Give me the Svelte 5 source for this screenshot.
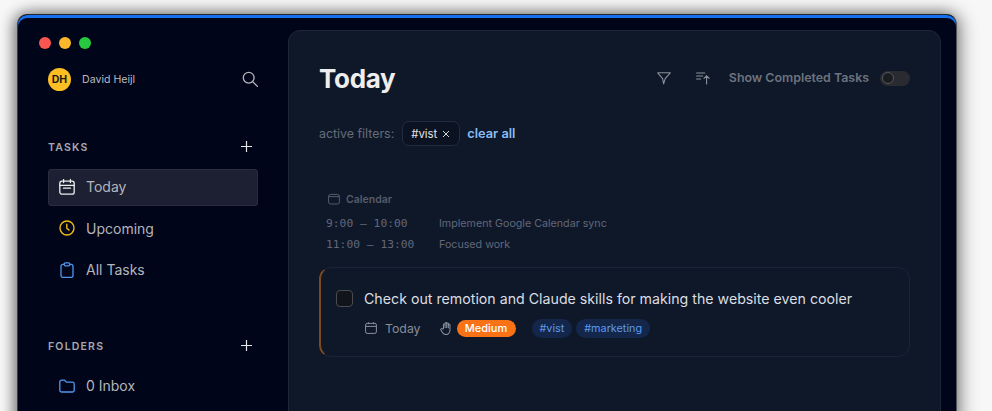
<script lang="ts">
	const navItems = [
		{ label: 'Today', icon: 'calendar', active: true },
		{ label: 'Upcoming', icon: 'clock', active: false },
		{ label: 'All Tasks', icon: 'clipboard', active: false },
	];
	const events = [
		{ time: '9:00 – 10:00', title: 'Implement Google Calendar sync' },
		{ time: '11:00 – 13:00', title: 'Focused work' },
	];
	const tags = ['#vist', '#marketing'];
</script>

<div class="page">
	<div class="window">
		<aside class="sidebar">
			<div class="traffic">
				<span class="dot red"></span>
				<span class="dot yellow"></span>
				<span class="dot green"></span>
			</div>

			<div class="user-row">
				<span class="avatar">DH</span>
				<span class="user-name">David Heijl</span>
				<svg class="search" viewBox="0 0 16 16" fill="none" stroke="#b4b6bb" stroke-width="1.3" stroke-linecap="round">
					<circle cx="6.7" cy="6.7" r="5.4" />
					<path d="M10.6 10.6 15.4 15.4" />
				</svg>
			</div>

			<div class="section-head tasks-head">
				<span>TASKS</span>
				<svg class="plus" viewBox="0 0 11 11" stroke="#e6e6e8" stroke-width="1.2"><path d="M5.5 0v11M0 5.5h11" /></svg>
			</div>

			<nav class="nav">
				{#each navItems as item (item.label)}
					<div class="nav-row" class:active={item.active}>
						{#if item.icon === 'calendar'}
							<svg class="nav-icon" viewBox="0 0 16 16" fill="none" stroke="#eceded" stroke-width="1.3" stroke-linecap="round">
								<rect x="0.8" y="2.2" width="14.4" height="13" rx="2.2" />
								<path d="M0.8 6.3h14.4M4.6 0.6v3M11.4 0.6v3M4.5 9.2h7" />
							</svg>
						{:else if item.icon === 'clock'}
							<svg class="nav-icon" viewBox="0 0 16 16" fill="none" stroke="#f2b90f" stroke-width="1.4" stroke-linecap="round">
								<circle cx="8" cy="8" r="7" />
								<path d="M7.8 4.2v4l2.2 1.9" />
							</svg>
						{:else}
							<svg class="nav-icon" viewBox="0 0 16 16" fill="none" stroke="#4f97ee" stroke-width="1.3">
								<rect x="2" y="2.4" width="12" height="13" rx="2" />
								<rect x="5.2" y="0.8" width="5.6" height="3" rx="1.2" fill="#01051a" />
							</svg>
						{/if}
						<span>{item.label}</span>
					</div>
				{/each}
			</nav>

			<div class="section-head folders-head">
				<span>FOLDERS</span>
				<svg class="plus" viewBox="0 0 11 11" stroke="#e6e6e8" stroke-width="1.2"><path d="M5.5 0v11M0 5.5h11" /></svg>
			</div>

			<div class="nav-row folder">
				<svg class="nav-icon folder-icon" viewBox="0 0 16 14" fill="none" stroke="#4f97ee" stroke-width="1.3" stroke-linejoin="round">
					<path d="M0.8 3a1.8 1.8 0 0 1 1.8-1.8h3l1.8 1.9h6a1.8 1.8 0 0 1 1.8 1.8v6.3a1.8 1.8 0 0 1-1.8 1.8H2.6a1.8 1.8 0 0 1-1.8-1.8z" />
				</svg>
				<span>0 Inbox</span>
			</div>
		</aside>

		<main class="panel">
			<header class="header">
				<h1>Today</h1>
				<div class="actions">
					<svg class="filter" viewBox="0 0 14 14" fill="none" stroke="#8b909b" stroke-width="1.1" stroke-linejoin="round">
						<path d="M0.7 1.8h12.6L8.2 7.6l-1.6 5.2-1-5.2z" />
					</svg>
					<svg class="sort" viewBox="0 0 14 14" fill="none" stroke="#8b909b" stroke-width="1.1" stroke-linecap="round">
						<path d="M0.6 2h8.2M0.6 5h6M0.6 8h4M10.6 13V5M8 7.4l2.6-2.6 2.6 2.6" />
					</svg>
					<span class="show-completed">Show Completed Tasks</span>
					<span class="toggle"><span class="knob"></span></span>
				</div>
			</header>

			<div class="filters">
				<span class="filters-label">active filters:</span>
				<span class="chip">#vist
					<svg viewBox="0 0 8 8" stroke="#d5d7db" stroke-width="1"><path d="M1 1l6 6M7 1L1 7" /></svg>
				</span>
				<span class="clear">clear all</span>
			</div>

			<section class="calendar">
				<div class="calendar-head">
					<svg viewBox="0 0 12 12" fill="none" stroke="#565c69" stroke-width="1">
						<rect x="0.6" y="1.4" width="10.8" height="9.6" rx="2" />
						<path d="M0.6 3.6h10.8" />
					</svg>
					<span>Calendar</span>
				</div>
				{#each events as ev (ev.time)}
					<div class="event">
						<span class="event-time">{ev.time}</span>
						<span class="event-title">{ev.title}</span>
					</div>
				{/each}
			</section>

			<article class="task">
				<div class="task-top">
					<span class="checkbox"></span>
					<span class="task-title">Check out remotion and Claude skills for making the website even cooler</span>
				</div>
				<div class="task-meta">
					<svg class="meta-cal" viewBox="0 0 12 12" fill="none" stroke="#8b909b" stroke-width="1">
						<rect x="0.6" y="1.4" width="10.8" height="10" rx="1.6" />
						<path d="M0.6 4.4h10.8M3.4 0.2v2M8.6 0.2v2" />
					</svg>
					<span class="meta-date">Today</span>
					<svg class="hand" viewBox="0.6 0.6 9.6 11.2" fill="none" stroke="#8b909b" stroke-width="0.9" stroke-linecap="round" stroke-linejoin="round">
						<path d="M3.2 6.4V3a.7.7 0 0 1 1.4 0v2.4V1.8a.7.7 0 0 1 1.4 0v3.6V2.2a.7.7 0 0 1 1.4 0v3.4V3.2a.7.7 0 0 1 1.4 0v4.6a3.6 3.6 0 0 1-3.6 3.6c-1.5 0-2.3-.7-3-1.9L1 7.4c-.4-.8.6-1.4 1.2-.8z" />
					</svg>
					<span class="priority">Medium</span>
					<div class="tags">
						{#each tags as tag (tag)}
							<span class="tag">{tag}</span>
						{/each}
					</div>
				</div>
			</article>
		</main>
	</div>
</div>

<style>
	:global(body) {
		margin: 0;
		background: #f7f7f7;
		overflow: hidden;
	}

	.page {
		height: 411px;
		box-sizing: border-box;
		padding: 14px 35px 0 17px;
		overflow: hidden;
		font-family: "Inter", "Noto Sans", sans-serif;
	}

	.window {
		display: flex;
		height: 440px;
		box-sizing: border-box;
		padding: 15px 15px 0 0;
		background: #01051a;
		border-radius: 10px 10px 0 0;
		border-top: 1px solid #23252d;
		border-left: 1px solid #3c3d44;
		border-right: 1px solid #55565c;
		box-shadow: inset 0 3px 0 #1570ef, -4px 0 14px rgba(0, 0, 0, 0.4), 4px 0 18px rgba(0, 0, 0, 0.4);
	}

	.sidebar {
		width: 270px;
		flex: none;
		box-sizing: border-box;
		padding: 7px 30px 0 30px;
		display: flex;
		flex-direction: column;
		color: #b4b6bb;
	}

	.traffic {
		display: flex;
		gap: 8px;
		margin-left: -9px;
	}

	.dot {
		width: 12px;
		height: 12px;
		border-radius: 50%;
	}

	.red { background: #fb5552; }
	.yellow { background: #fcb72a; }
	.green { background: #27c840; }

	.user-row {
		display: flex;
		align-items: center;
		margin-top: 18px;
		height: 24px;
	}

	.avatar {
		width: 23px;
		height: 23px;
		border-radius: 50%;
		background: #fbbf24;
		color: #1b1b1b;
		font-size: 10.5px;
		font-weight: 700;
		display: flex;
		align-items: center;
		justify-content: center;
	}

	.user-name {
		margin-left: 11px;
		font-size: 10.6px;
		color: #b9babd;
	}

	.search {
		margin-left: auto;
		width: 16px;
		height: 16px;
	}

	.section-head {
		display: flex;
		align-items: center;
		justify-content: space-between;
		padding-right: 6px;
		font-size: 10.5px;
		font-weight: 600;
		letter-spacing: 1.2px;
		color: #a7a9ae;
	}

	.section-head .plus { margin-bottom: 1px; }

	.tasks-head { margin-top: 48px; height: 16px; }
	.folders-head { margin-top: 49px; height: 16px; }

	.plus {
		width: 11px;
		height: 11px;
	}

	.nav {
		margin-top: 14px;
		display: flex;
		flex-direction: column;
		gap: 4.5px;
	}

	.nav-row {
		display: flex;
		align-items: center;
		height: 37px;
		box-sizing: border-box;
		padding: 0 0 2px 10px;
		gap: 11px;
		font-size: 14px;
		color: #b4b6bb;
		border-radius: 3px;
		border: 1px solid transparent;
	}

	.nav-row.active {
		background: #1d2032;
		border-color: #2a2d3e;
	}

	.nav-icon {
		width: 16px;
		height: 16px;
		flex: none;
	}

	.folder { margin-top: 14px; }

	.panel {
		flex: 1;
		min-width: 0;
		box-sizing: border-box;
		padding: 27px 30px 0 30px;
		background: #0e1829;
		border: 1px solid #1e2738;
		border-radius: 12px 12px 0 0;
	}

	.header {
		display: flex;
		align-items: center;
		justify-content: space-between;
		height: 40px;
	}

	h1 {
		margin: 0;
		font-size: 26px;
		font-weight: 700;
		letter-spacing: -0.3px;
		color: #eeeeee;
	}

	.actions {
		display: flex;
		align-items: center;
	}

	.filter, .sort {
		width: 14px;
		height: 14px;
	}

	.sort { margin-left: 25px; }

	.show-completed {
		margin: 0 0 2px 19px;
		font-size: 12.4px;
		font-weight: 600;
		color: #6d727e;
	}

	.toggle {
		margin-left: 11px;
		width: 30px;
		height: 15px;
		border-radius: 8px;
		background: #2a2b30;
		display: flex;
		align-items: center;
		padding-left: 2px;
		box-sizing: border-box;
	}

	.knob {
		width: 10px;
		height: 10px;
		border-radius: 50%;
		background: #1b1c20;
		border: 1px solid #55565b;
	}

	.filters {
		display: flex;
		align-items: center;
		margin-top: 23px;
		height: 25px;
		font-size: 12.4px;
	}

	.filters-label { color: #666c79; }

	.chip {
		margin-left: 8px;
		height: 25px;
		width: 58px;
		box-sizing: border-box;
		padding-left: 8px;
		display: flex;
		align-items: center;
		gap: 5px;
		border-radius: 7px;
		border: 1px solid #222c3f;
		background: #0b1322;
		font-size: 11.4px;
		color: #e4e5e8;
	}

	.chip svg {
		width: 8px;
		height: 8px;
	}

	.clear {
		margin-left: 7px;
		font-size: 12.8px;
		font-weight: 600;
		color: #89bdf6;
	}

	.calendar {
		margin-top: 44px;
		padding-left: 7px;
	}

	.calendar-head {
		display: flex;
		align-items: center;
		gap: 6px;
		height: 18px;
		padding-left: 2px;
		font-size: 10.5px;
		font-weight: 600;
		color: #565c69;
	}

	.calendar-head svg {
		width: 12px;
		height: 12px;
	}

	.event {
		display: flex;
		align-items: center;
		height: 21px;
		font-size: 10.7px;
		color: #62677a;
	}

	.calendar-head + .event { margin-top: 5px; }

	.event-time {
		width: 113px;
		font-family: "DejaVu Sans Mono", monospace;
		font-size: 11.3px;
	}

	.task {
		margin-top: 12px;
		height: 90px;
		box-sizing: border-box;
		padding: 22px 16px 0 15px;
		border: 1px solid #1a2436;
		border-left: 2px solid #7d4a20;
		border-radius: 12px;
	}

	.task-top {
		display: flex;
		align-items: center;
		gap: 11px;
	}

	.checkbox {
		width: 17px;
		height: 17px;
		box-sizing: border-box;
		border-radius: 4px;
		border: 1px solid #4a4c52;
		background: #12141c;
	}

	.task-title {
		font-size: 14.2px;
		color: #dcdee2;
		white-space: nowrap;
	}

	.task-meta {
		display: flex;
		align-items: center;
		margin-top: 11px;
		margin-left: 29px;
		height: 20px;
	}

	.meta-cal {
		width: 12px;
		height: 12px;
	}

	.meta-date {
		margin-left: 8px;
		font-size: 12.3px;
		color: #888d98;
	}

	.hand {
		margin-left: 19px;
		width: 12px;
		height: 13px;
	}

	.priority {
		margin-left: 5px;
		height: 17px;
		width: 59px;
		display: flex;
		align-items: center;
		justify-content: center;
		border-radius: 9px;
		background: #f97316;
		color: #fff;
		font-size: 11px;
		font-weight: 500;
	}

	.tags {
		display: flex;
		gap: 4px;
		margin-left: 16px;
	}

	.tag {
		height: 19px;
		padding: 0 8px;
		display: flex;
		align-items: center;
		border-radius: 10px;
		background: #14264a;
		color: #5b9bef;
		font-size: 10.8px;
	}
</style>
